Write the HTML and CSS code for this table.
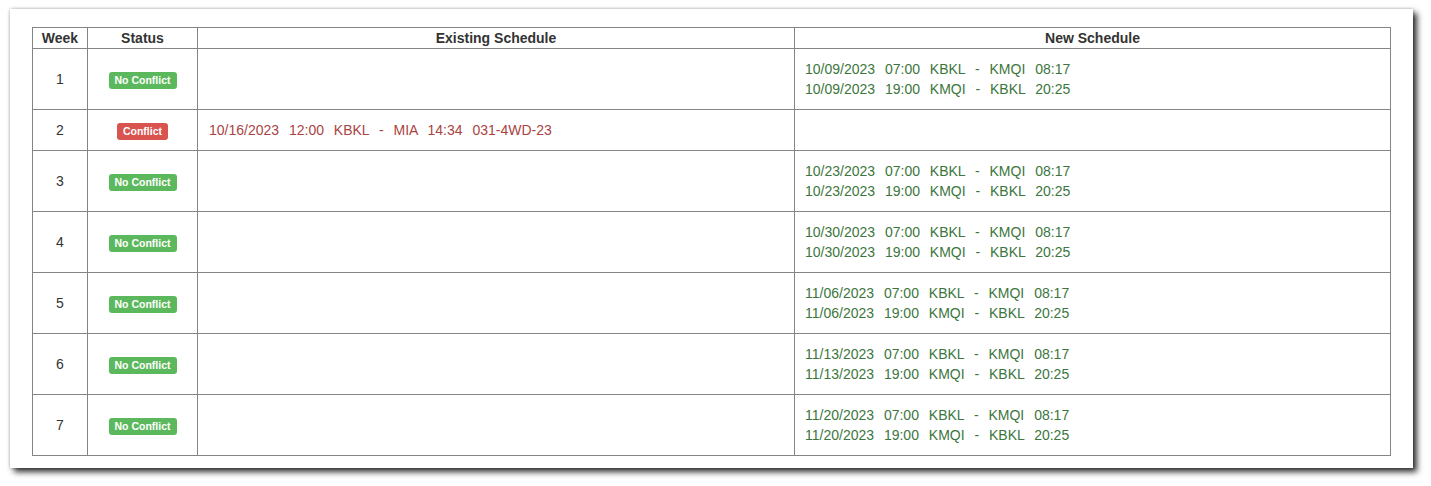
FILE: index.html
```html
<!DOCTYPE html>
<html>
<head>
<meta charset="utf-8">
<link rel="stylesheet" href="styles.css">
</head>
<body>
<div class="card">
<table class="sched">
<colgroup>
<col class="c-week"><col class="c-status"><col class="c-exist"><col class="c-new">
</colgroup>
<thead>
<tr><th>Week</th><th>Status</th><th>Existing Schedule</th><th>New Schedule</th></tr>
</thead>
<tbody>
<tr class="tall"><td class="wk">1</td><td class="st"><span class="label ok">No Conflict</span></td><td class="ex"></td><td class="nw"><div class="ln">10/09/2023   07:00   KBKL   -   KMQI   08:17</div><div class="ln">10/09/2023   19:00   KMQI   -   KBKL   20:25</div></td></tr>
<tr><td class="wk">2</td><td class="st"><span class="label bad">Conflict</span></td><td class="ex"><div class="ln">10/16/2023   12:00   KBKL   -   MIA   14:34   031-4WD-23</div></td><td class="nw"></td></tr>
<tr class="tall"><td class="wk">3</td><td class="st"><span class="label ok">No Conflict</span></td><td class="ex"></td><td class="nw"><div class="ln">10/23/2023   07:00   KBKL   -   KMQI   08:17</div><div class="ln">10/23/2023   19:00   KMQI   -   KBKL   20:25</div></td></tr>
<tr class="tall"><td class="wk">4</td><td class="st"><span class="label ok">No Conflict</span></td><td class="ex"></td><td class="nw"><div class="ln">10/30/2023   07:00   KBKL   -   KMQI   08:17</div><div class="ln">10/30/2023   19:00   KMQI   -   KBKL   20:25</div></td></tr>
<tr class="tall"><td class="wk">5</td><td class="st"><span class="label ok">No Conflict</span></td><td class="ex"></td><td class="nw"><div class="ln">11/06/2023   07:00   KBKL   -   KMQI   08:17</div><div class="ln">11/06/2023   19:00   KMQI   -   KBKL   20:25</div></td></tr>
<tr class="tall"><td class="wk">6</td><td class="st"><span class="label ok">No Conflict</span></td><td class="ex"></td><td class="nw"><div class="ln">11/13/2023   07:00   KBKL   -   KMQI   08:17</div><div class="ln">11/13/2023   19:00   KMQI   -   KBKL   20:25</div></td></tr>
<tr class="tall"><td class="wk">7</td><td class="st"><span class="label ok">No Conflict</span></td><td class="ex"></td><td class="nw"><div class="ln">11/20/2023   07:00   KBKL   -   KMQI   08:17</div><div class="ln">11/20/2023   19:00   KMQI   -   KBKL   20:25</div></td></tr>
</tbody>
</table>
</div>
</body>
</html>
```
FILE: styles.css
```css
html, body {
  margin: 0;
  background: #fff;
}
body {
  padding: 9px 0 20px 10px;
  font-family: "Liberation Sans", Arial, sans-serif;
  font-size: 14px;
  line-height: 20px;
  color: #333;
}
.card {
  box-sizing: border-box;
  width: 1403px;
  padding: 18px 23px 12px 22px;
  background: #fff;
  box-shadow: 0 0 3px rgba(0,0,0,0.3), 4px 4px 6px rgba(0,0,0,0.8);
}
.sched {
  width: 1358px;
  border-collapse: collapse;
  table-layout: fixed;
}
.c-week { width: 55px; }
.c-status { width: 110px; }
.c-exist { width: 597px; }
.c-new { width: 596px; }
.sched th, .sched td {
  border: 1px solid #858585;
}
.sched th {
  font-weight: bold;
  padding: 0;
  text-align: center;
  line-height: 20px;
}
.sched td {
  padding: 10px;
  vertical-align: middle;
}
.sched tr.tall td {
  height: 40px;
}
.wk, .st {
  text-align: center;
}
.ln {
  white-space: pre;
  word-spacing: -0.6px;
}
.ex { color: #a94442; padding-left: 11px !important; }
.nw { color: #3c763d; }
.label {
  display: inline-block;
  font-size: 10.5px;
  font-weight: bold;
  line-height: 11px;
  color: #fff;
  padding: 3px 6px 3px;
  border-radius: 3px;
  vertical-align: middle;
}
.ok { background: #5cb85c; }
.bad { background: #d9534f; }
```
